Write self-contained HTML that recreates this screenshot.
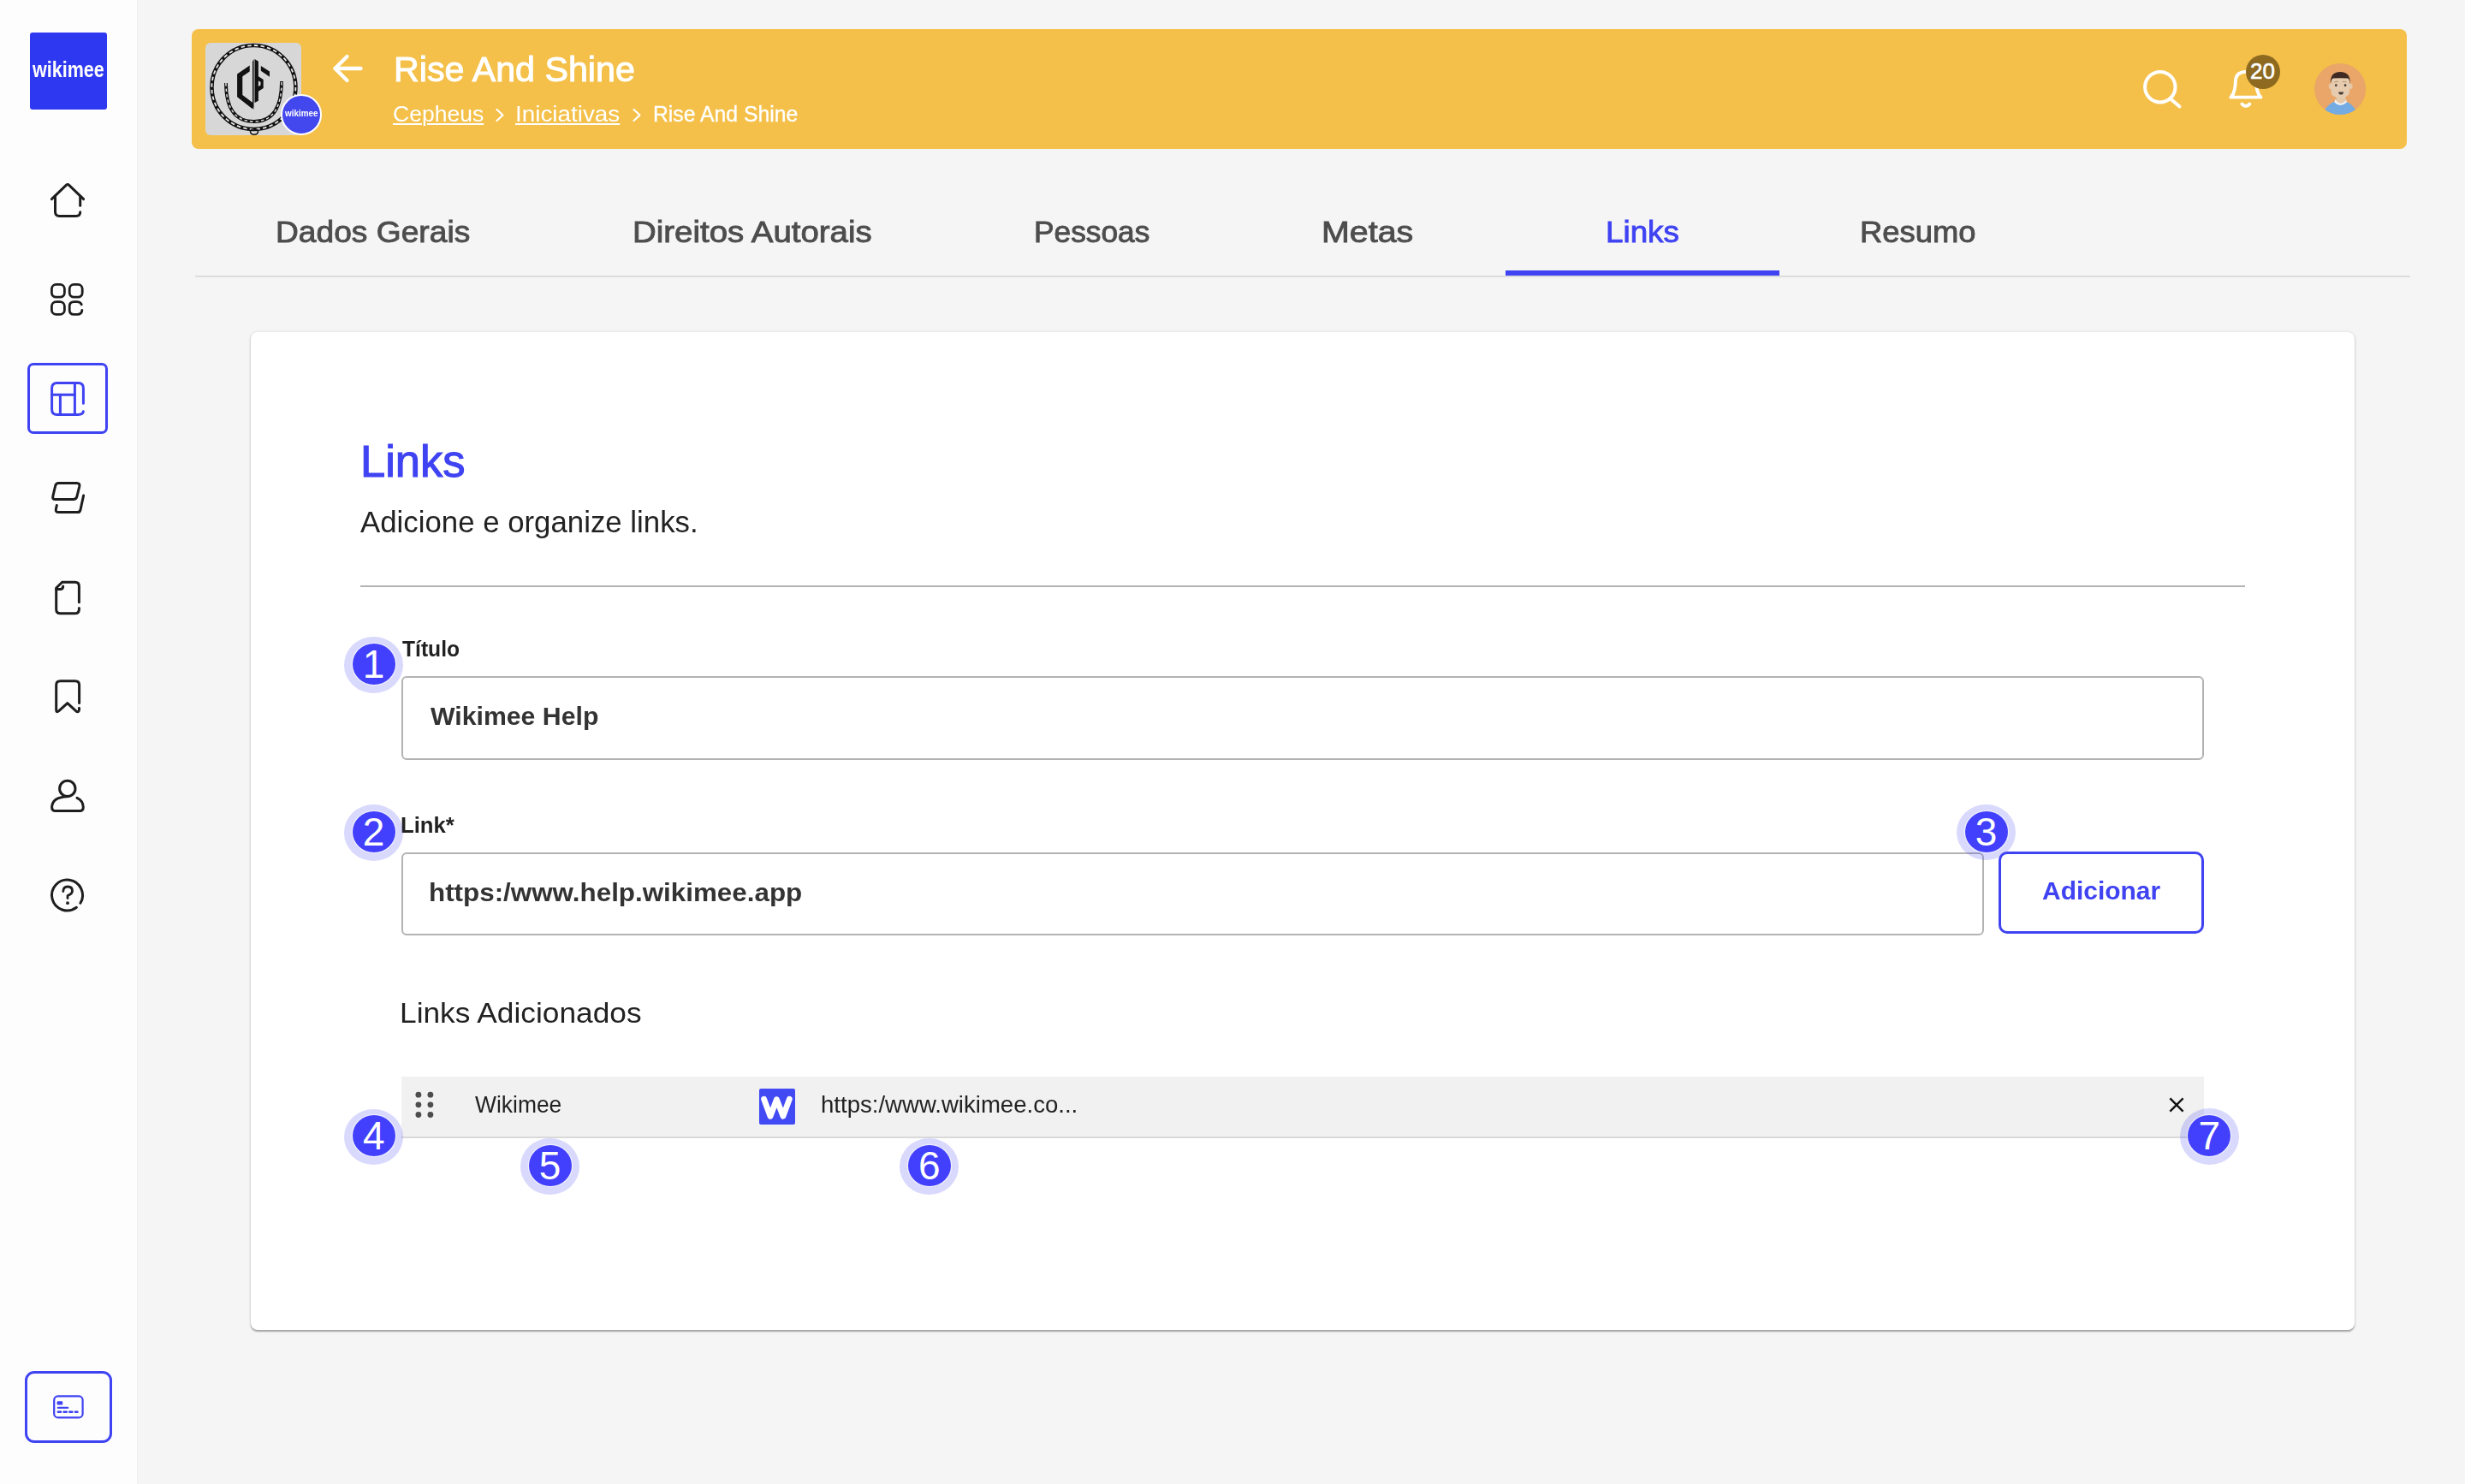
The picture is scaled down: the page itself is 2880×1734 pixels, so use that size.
<!DOCTYPE html>
<html>
<head>
<meta charset="utf-8">
<style>
*{box-sizing:border-box;margin:0;padding:0}
html,body{width:2880px;height:1734px;overflow:hidden}
body{background:#f5f5f5;font-family:"Liberation Sans",sans-serif;position:relative}
.t{position:absolute;white-space:nowrap;line-height:1;transform-origin:0 0}
svg{position:absolute;overflow:visible}
#sidebar{position:absolute;left:0;top:0;width:160px;height:1734px;background:#fdfdfd;box-shadow:1px 0 2px rgba(0,0,0,0.03)}
#logo{position:absolute;left:35px;top:38px;width:90px;height:90px;background:#2e38f0;border-radius:3px}
#active{position:absolute;left:32px;top:424px;width:94px;height:83px;border:3px solid #3f43f2;border-radius:7px}
#bottombtn{position:absolute;left:29px;top:1602px;width:102px;height:84px;border:3px solid #3f43f2;border-radius:11px}
#header{position:absolute;left:224px;top:34px;width:2588px;height:140px;background:#f4c049;border-radius:8px}
#tabline{position:absolute;left:228px;top:322px;width:2588px;height:2px;background:#dcdcdc}
#tabul{position:absolute;left:1759px;top:316px;width:320px;height:6px;background:#3f43f2}
#card{position:absolute;left:293px;top:388px;width:2458px;height:1166px;background:#fff;border-radius:8px;box-shadow:0 1.5px 2px rgba(0,0,0,0.32),0 0 4px rgba(0,0,0,0.07)}
#hr{position:absolute;left:421px;top:684px;width:2202px;height:2px;background:#b3b3b3}
.inp{position:absolute;border:2px solid #b3b3b3;border-radius:6px;background:#fff}
#btn{position:absolute;left:2335px;top:995px;width:240px;height:96px;border:3px solid #3f43f2;border-radius:10px;background:#fff}
#row{position:absolute;left:469px;top:1258px;width:2106px;height:72px;background:#f1f1f1;border-bottom:2px solid #d9d9d9}
.badge{position:absolute;width:69px;height:65.5px;border-radius:50%;background:rgba(66,64,245,0.2);filter:blur(0.4px)}
.bi{position:absolute;width:50px;height:48px;border-radius:50%;background:#4240fd;box-shadow:0 0 0 1.3px rgba(255,255,255,0.55);color:#fff;font-style:normal;font-size:46px;line-height:48px;text-align:center}
</style>
</head>
<body>
<div id="sidebar">
  <div id="logo"></div>
  <div class="t" style="left:37.5px;top:69.3px;font-size:25px;font-weight:700;color:#fff;transform:scaleX(0.86)">wikimee</div>
  <div id="active"></div>
  <div id="bottombtn"></div>
</div>
<svg width="160" height="1734" style="left:0;top:0" fill="none" stroke="#1e1e1e" stroke-width="3" stroke-linecap="round" stroke-linejoin="round">
  <!-- home -->
  <path d="M60.4,232.6 L77.3,216.3 Q79,214.8 80.7,216.3 L97.6,232.6"/>
  <path d="M64.5,229 V247.5 Q64.5,252.5 69.5,252.5 H88.7 Q93.7,252.5 93.7,247.8"/>
  <path d="M93.7,240.2 V230.5"/>
  <!-- grid -->
  <g stroke-width="2.8">
  <rect x="60.4" y="332.4" width="15" height="14.8" rx="5.2"/>
  <rect x="81.2" y="332.4" width="15" height="14.8" rx="5.2"/>
  <rect x="60.4" y="352.6" width="15" height="14.8" rx="5.2"/>
  <path d="M95.3,355.8 Q93.8,352.6 90,352.6 H86.4 Q81.2,352.6 81.2,357.8 V362.2 Q81.2,367.4 86.4,367.4 H90 Q95.6,367.4 95.9,362.3"/>
  </g>
  <!-- dashboard active -->
  <g stroke="#3f43f2">
  <path d="M97.4,471.2 V453.6 Q97.4,447.6 91.4,447.6 H66.6 Q60.6,447.6 60.6,453.6 V478.4 Q60.6,484.4 66.6,484.4 H91.4 Q97.1,484.4 97.4,480.7"/>
  <path d="M60.6,461.3 H87.4"/>
  <path d="M70.4,461.3 V484.4"/>
  <path d="M87.4,447.6 V484.4"/>
  </g>
  <!-- stack -->
  <path d="M68.3,564.5 H89.8 Q93.6,564.5 92.8,568.3 L89.9,580.2 Q89.1,583.6 85.3,583.6 H64.8 Q61,583.6 61.8,580 L64.6,568 Q65.4,564.5 68.3,564.5 Z"/>
  <path d="M66.3,590.5 L65.4,594.8 Q64.6,598.6 68.4,598.6 H90.5 Q93.4,598.6 94,595.6 L97.6,579"/>
  <!-- doc -->
  <path d="M92.4,703.8 V685 Q92.4,680.2 87.6,680.2 H72.6 L65.7,687 V712 Q65.7,716.8 70.5,716.8 H87.6 Q92.1,716.8 92.4,712.3 V710.5"/>
  <path d="M65.7,688.6 H70.4 Q73.7,688.6 73.7,685"/>
  <!-- bookmark -->
  <path d="M92.6,821.5 V800.5 Q92.6,795.8 87.9,795.8 H70.4 Q65.7,795.8 65.7,800.5 V829.5 Q65.7,833.3 68.8,830.7 L78.8,821.6 L88.6,830.7 Q91.9,833.3 92.5,829.3 V827.3"/>
  <!-- person -->
  <circle cx="78.8" cy="921.4" r="9.2"/>
  <path d="M78.8,930.8 Q61,931.5 60.6,943.3 Q60.6,947.6 64.9,947.6 H93 Q97.3,947.6 97.3,943.3 Q97,935.5 90,932.4"/>
  <!-- help -->
  <path d="M93.9,1055.3 A18,18 0 1 0 89.4,1060.3"/>
  <path d="M73.8,1041.5 Q74,1036 79,1036 Q84.5,1036 84.5,1041 Q84.5,1044.5 79,1046.5 V1049.5" stroke-width="2.8"/>
  <circle cx="79" cy="1055.2" r="1.9" fill="#202020" stroke="none"/>
</svg>
<svg width="160" height="1734" style="left:0;top:0" fill="none" stroke="#3f43f2" stroke-width="2.2" stroke-linecap="round" stroke-linejoin="round">
  <rect x="63.2" y="1631.4" width="33.4" height="25" rx="4.5"/>
  <rect x="66.6" y="1637.2" width="6.6" height="4.4" rx="1.2" fill="#3f43f2" stroke="none"/>
  <path d="M67.8,1644.9 H79.2"/>
  <path d="M67.8,1649.8 H90.5" stroke-dasharray="3.3,3.4" stroke-width="2.4"/>
</svg>

<div id="header"></div>
<!-- project image -->
<div style="position:absolute;left:240px;top:50px;width:112px;height:108px;background:#d7d7d7;border-radius:6px;overflow:hidden">
<svg width="112" height="108" style="left:0;top:0" fill="none" stroke="#111">
  <circle cx="56.4" cy="52" r="49" stroke-width="4.6"/>
  <circle cx="56.4" cy="52" r="49" stroke-width="1.8" stroke="#e8e8e8" stroke-dasharray="4.5,3.2"/>
  <path d="M24,47 Q24,92 57,92 Q89,92 89,45" stroke-width="3.8"/>
  <path d="M24,47 Q24,92 57,92 Q89,92 89,45" stroke-width="1.4" stroke="#e8e8e8" stroke-dasharray="3.5,3"/>
  <path d="M51.7,26.6 L37.1,36.4 V63.3 L55.3,77.5 V70 L43.3,61.1 V39.3 L51.7,33.5 Z" fill="#111" stroke="none"/>
  <path d="M57.5,18.9 L61.9,21.8 V39.3 L67.7,43 V53.1 L61.9,56.8 V67.7 L57.5,69.9 Z" fill="#111" stroke="none"/>
  <path d="M61.9,44.4 V51 L64.5,49.5 V45.8 Z" fill="#d7d7d7" stroke="none"/>
  <path d="M55,22 L56.5,19 V78 L55,75 Z" fill="#111" stroke="none"/>
  <path d="M64.8,26.9 L75,33.5 V39.7 L64.8,32.8 Z" fill="#111" stroke="none"/>
  <ellipse cx="57" cy="104" rx="4.5" ry="3.2" stroke-width="1.6"/>
</svg>
</div>
<div style="position:absolute;left:328px;top:110px;width:48px;height:48px;border-radius:50%;background:#4347ee;border:2px solid #fff"></div>
<div class="t" style="left:333px;top:127px;font-size:11px;font-weight:700;color:#fff;transform:scaleX(0.9)">wikimee</div>
<!-- back arrow -->
<svg width="40" height="40" style="left:385px;top:60px" fill="none" stroke="#fff" stroke-width="4.4" stroke-linecap="round" stroke-linejoin="round">
  <path d="M6.5,20 H36.5"/>
  <path d="M20.5,6 L6.5,20 L20.5,34"/>
</svg>
<!-- breadcrumb chevrons -->
<svg width="20" height="20" style="left:575px;top:124px" fill="none" stroke="#fff" stroke-width="2.2" stroke-linecap="round" stroke-linejoin="round"><path d="M5.5,4 L12.5,10.5 L5.5,17"/></svg>
<svg width="20" height="20" style="left:735px;top:124px" fill="none" stroke="#fff" stroke-width="2.2" stroke-linecap="round" stroke-linejoin="round"><path d="M5.5,4 L12.5,10.5 L5.5,17"/></svg>
<!-- search -->
<svg width="60" height="60" style="left:2494px;top:72px" fill="none" stroke="#fff" stroke-width="4" stroke-linecap="round">
  <circle cx="29.8" cy="29.7" r="17.7"/>
  <path d="M42.5,44 L52.5,52.5"/>
</svg>
<!-- bell -->
<svg width="60" height="60" style="left:2594px;top:72px" fill="none" stroke="#fff" stroke-width="3.8" stroke-linecap="round" stroke-linejoin="round">
  <path d="M12.3,41.7 H47.5 Q44.2,38.3 43.1,33 Q42,28 42,24 Q42,11.8 29.9,11.8 Q17.8,11.8 17.8,24 Q17.8,28 16.7,33 Q15.6,38.3 12.3,41.7 Z"/>
  <path d="M25.4,49.6 Q29.9,54.4 34.4,49.6"/>
</svg>
<div style="position:absolute;left:2624px;top:64px;width:40px;height:40px;border-radius:50%;background:#8d6a20"></div>
<div class="t" style="left:2629px;top:69.9px;font-size:26px;color:#fff;-webkit-text-stroke:0.6px #fff">20</div>
<!-- avatar -->
<svg width="62" height="62" style="left:2703px;top:73px">
  <defs><clipPath id="av"><circle cx="31.1" cy="31" r="30.1"/></clipPath></defs>
  <g clip-path="url(#av)">
  <rect width="62" height="62" fill="#e9a668"/>
  <path d="M11,60 Q17,45.5 31.2,44.2 Q45.5,45.5 51.5,60 L51.5,64 H11 Z" fill="#74abe2"/>
  <path d="M25.5,43 Q31.2,49.5 37.8,43 L39,46.5 Q31.2,53.5 24.3,46.5 Z" fill="#f4f4f8"/>
  <path d="M26.7,38 H37.6 V45 Q31.2,51 26.7,45 Z" fill="#e3c8aa"/>
  <ellipse cx="19.8" cy="27.8" rx="2" ry="3.3" fill="#e3c8aa"/>
  <ellipse cx="43.6" cy="27.8" rx="2" ry="3.3" fill="#e3c8aa"/>
  <path d="M20.3,22 Q20.3,15 31.2,15 Q42.3,15 42.3,22 V33 Q42.3,41.3 31.2,41.3 Q20.3,41.3 20.3,33 Z" fill="#e6cbae"/>
  <path d="M20,25 Q19,11 31.2,10.9 Q43.5,11 42.8,25 Q42,18.6 40,18.5 Q31.2,17.8 23,18.5 Q21,18.6 20,25 Z" fill="#3e2a22"/>
  <path d="M24.3,23 Q26.5,21.8 28.7,22.6 M34,22.6 Q36.2,21.8 38.4,23" stroke="#a88a6a" stroke-width="0.9" fill="none"/>
  <circle cx="26.3" cy="26.7" r="1.35" fill="#3f3a35"/><circle cx="37.1" cy="26.7" r="1.35" fill="#3f3a35"/>
  <path d="M29.1,34.4 H35.2 Q34.6,37.6 32.1,37.6 Q29.7,37.6 29.1,34.4 Z" fill="#463c36"/>
  </g>
</svg>

<div id="tabline"></div>
<div id="tabul"></div>

<div id="card"></div>
<div id="hr"></div>
<div class="inp" style="left:469px;top:790px;width:2106px;height:98px"></div>
<div class="inp" style="left:469px;top:996px;width:1849px;height:97px"></div>
<div id="btn"></div>
<div id="row"></div>
<!-- drag dots -->
<svg width="30" height="40" style="left:480px;top:1270px" fill="#4d4d4d">
  <circle cx="8.9" cy="9.2" r="3.4"/><circle cx="22.9" cy="9.2" r="3.4"/>
  <circle cx="8.9" cy="20.8" r="3.4"/><circle cx="22.9" cy="20.8" r="3.4"/>
  <circle cx="8.9" cy="32.5" r="3.4"/><circle cx="22.9" cy="32.5" r="3.4"/>
</svg>
<!-- W icon -->
<div style="position:absolute;left:887px;top:1272px;width:42px;height:42px;background:#424af4;border-radius:2px"></div>
<svg width="42" height="42" style="left:887px;top:1272px" fill="none" stroke="#fff" stroke-width="6.8" stroke-linecap="round" stroke-linejoin="round">
  <path d="M5.6,12.3 L13,32.2 L20.4,12.8 L28,32.2 L35.3,12.3"/>
</svg>
<!-- close x -->
<svg width="24" height="24" style="left:2531px;top:1279px" fill="none" stroke="#111" stroke-width="2.4" stroke-linecap="square">
  <path d="M5.2,5.2 L18.8,18.8 M18.8,5.2 L5.2,18.8"/>
</svg>
<div class="t" style="left:321.8px;top:252.6px;font-size:35px;font-weight:400;color:#4d4d4d;transform:scaleX(1.0619);-webkit-text-stroke:0.9px #4d4d4d;">Dados Gerais</div>
<div class="t" style="left:738.7px;top:252.6px;font-size:35px;font-weight:400;color:#4d4d4d;transform:scaleX(1.0976);-webkit-text-stroke:0.9px #4d4d4d;">Direitos Autorais</div>
<div class="t" style="left:1208.0px;top:252.6px;font-size:35px;font-weight:400;color:#4d4d4d;transform:scaleX(1.0077);-webkit-text-stroke:0.9px #4d4d4d;">Pessoas</div>
<div class="t" style="left:1544.2px;top:252.6px;font-size:35px;font-weight:400;color:#4d4d4d;transform:scaleX(1.1253);-webkit-text-stroke:0.9px #4d4d4d;">Metas</div>
<div class="t" style="left:1875.5px;top:252.6px;font-size:35px;font-weight:400;color:#3f43f2;transform:scaleX(1.0513);-webkit-text-stroke:0.9px #3f43f2;">Links</div>
<div class="t" style="left:2172.9px;top:252.6px;font-size:35px;font-weight:400;color:#4d4d4d;transform:scaleX(1.0397);-webkit-text-stroke:0.9px #4d4d4d;">Resumo</div>
<div class="t" style="left:460.0px;top:60.5px;font-size:41px;font-weight:400;color:#fff;transform:scaleX(1.0054);-webkit-text-stroke:1.0px #fff;">Rise And Shine</div>
<div class="t" style="left:458.9px;top:120.7px;font-size:25px;font-weight:400;color:#fff;transform:scaleX(1.0612);text-decoration:underline;text-underline-offset:2px;text-decoration-thickness:2px;">Cepheus</div>
<div class="t" style="left:602.4px;top:120.7px;font-size:25px;font-weight:400;color:#fff;transform:scaleX(1.114);text-decoration:underline;text-underline-offset:2px;text-decoration-thickness:2px;">Iniciativas</div>
<div class="t" style="left:763.4px;top:120.7px;font-size:25px;font-weight:400;color:#fff;transform:scaleX(0.9899);-webkit-text-stroke:0.3px #fff;">Rise And Shine</div>
<div class="t" style="left:420.9px;top:513.8px;font-size:51px;font-weight:400;color:#3f43f2;transform:scaleX(1.0292);-webkit-text-stroke:1.1px #3f43f2;">Links</div>
<div class="t" style="left:421.3px;top:591.7px;font-size:35px;font-weight:400;color:#222;transform:scaleX(0.9942);">Adicione e organize links.</div>
<div class="t" style="left:469.5px;top:746.0px;font-size:25px;font-weight:700;color:#222;transform:scaleX(0.9851);">Título</div>
<div class="t" style="left:503.0px;top:822.2px;font-size:30px;font-weight:700;color:#333;transform:scaleX(1.0082);">Wikimee Help</div>
<div class="t" style="left:468.4px;top:952.4px;font-size:25px;font-weight:700;color:#222;transform:scaleX(1.0271);">Link*</div>
<div class="t" style="left:500.9px;top:1028.4px;font-size:30px;font-weight:700;color:#333;transform:scaleX(1.0454);">https:/www.help.wikimee.app</div>
<div class="t" style="left:2386.0px;top:1026.0px;font-size:30px;font-weight:700;color:#3f43f2;transform:scaleX(0.9985);">Adicionar</div>
<div class="t" style="left:467.4px;top:1166.4px;font-size:34px;font-weight:400;color:#222;transform:scaleX(1.0384);">Links Adicionados</div>
<div class="t" style="left:555.3px;top:1277.5px;font-size:27px;font-weight:400;color:#222;transform:scaleX(0.9786);">Wikimee</div>
<div class="t" style="left:959.4px;top:1277.5px;font-size:27px;font-weight:400;color:#222;transform:scaleX(1.021);">https:/www.wikimee.co...</div><div class="badge" style="left:402.0px;top:744.0px"></div><div class="bi" style="left:411.5px;top:751.8px">1</div>
<div class="badge" style="left:402.1px;top:940.0px"></div><div class="bi" style="left:411.6px;top:947.8px">2</div>
<div class="badge" style="left:2286.0px;top:939.9px"></div><div class="bi" style="left:2295.5px;top:947.6px">3</div>
<div class="badge" style="left:402.4px;top:1295.5px"></div><div class="bi" style="left:411.9px;top:1303.2px">4</div>
<div class="badge" style="left:608.1px;top:1330.0px"></div><div class="bi" style="left:617.6px;top:1337.8px">5</div>
<div class="badge" style="left:1051.3px;top:1330.0px"></div><div class="bi" style="left:1060.8px;top:1337.8px">6</div>
<div class="badge" style="left:2546.9px;top:1295.2px"></div><div class="bi" style="left:2556.4px;top:1303.0px">7</div></body></html>
